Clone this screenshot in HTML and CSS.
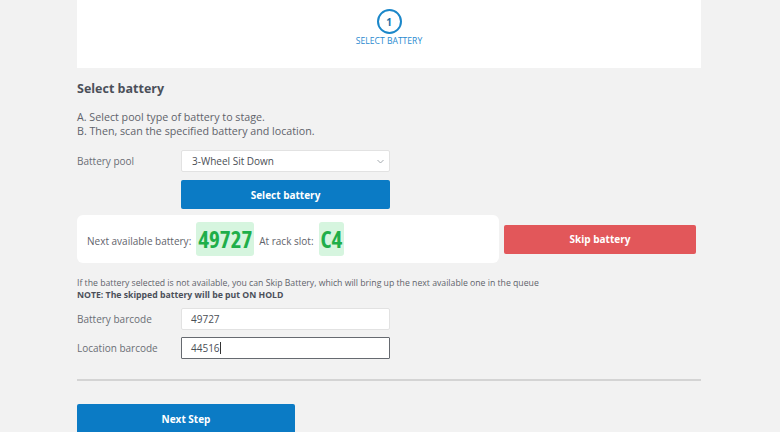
FILE: index.html
```html
<!DOCTYPE html>
<html>
<head>
<meta charset="utf-8">
<link rel="stylesheet" href="styles.css">
</head>
<body>
<div class="page">
  <div class="stepper">
    <div class="step">
      <div class="step-circle">1</div>
      <div class="step-label">SELECT BATTERY</div>
    </div>
  </div>

  <h2 class="title">Select battery</h2>
  <p class="intro">A. Select pool type of battery to stage.<br>B. Then, scan the specified battery and location.</p>

  <div class="form-row pool-row">
    <label class="label">Battery pool</label>
    <div class="select">
      <span>3-Wheel Sit Down</span>
      <svg class="chev" width="7" height="5" viewBox="0 0 7 5"><path d="M0.5 1 L3.5 4 L6.5 1" fill="none" stroke="#9aa0a6" stroke-width="0.9"/></svg>
    </div>
  </div>
  <div class="form-row">
    <span class="label"></span>
    <button class="btn btn-blue btn-select">Select battery</button>
  </div>

  <div class="info-row">
    <div class="info-box">
      <span class="info-text">Next available battery:</span>
      <span class="badge">49727</span>
      <span class="info-text">At rack slot:</span>
      <span class="badge">C4</span>
    </div>
    <button class="btn btn-red btn-skip">Skip battery</button>
  </div>

  <p class="note">If the battery selected is not available, you can Skip Battery, which will bring up the next available one in the queue<br><strong>NOTE: The skipped battery will be put ON HOLD</strong></p>

  <div class="form-row barcode-row">
    <label class="label">Battery barcode</label>
    <div class="input">49727</div>
  </div>
  <div class="form-row barcode-row">
    <label class="label">Location barcode</label>
    <div class="input input-focus">44516<span class="caret"></span></div>
  </div>

  <hr class="divider">

  <button class="btn btn-blue btn-next">Next Step</button>
</div>
</body>
</html>
```

FILE: styles.css
```css
* { box-sizing: border-box; }
html, body { margin: 0; padding: 0; }
body {
  background: #f2f2f2;
  font-family: "Open Sans", "Noto Sans", sans-serif;
  color: #5d6169;
  overflow: hidden;
  height: 432px;
}
.page {
  width: 624px;
  margin: 0 auto;
  position: relative;
  left: -1px;
}
.stepper {
  background: #fff;
  height: 68px;
  display: flex;
  justify-content: center;
  padding-top: 9px;
}
.step {
  display: flex;
  flex-direction: column;
  align-items: center;
}
.step-circle {
  width: 25px;
  height: 25px;
  border: 2px solid #1b87c9;
  border-radius: 50%;
  display: flex;
  align-items: center;
  justify-content: center;
  font-size: 10px;
  font-weight: 700;
  color: #1b6fa8;
}
.step-label {
  margin-top: 1px;
  font-size: 8.6px;
  color: #2a8ad0;
}
.title {
  margin: 12px 0 0;
  font-size: 12.5px;
  font-weight: 700;
  color: #4b505a;
  line-height: 18px;
}
.intro {
  margin: 12px 0 0;
  font-size: 10.7px;
  line-height: 14px;
  color: #5f636b;
}
.form-row {
  display: flex;
  align-items: center;
}
.label {
  width: 104px;
  flex: none;
  font-size: 10px;
  color: #6a6e75;
}
.pool-row { margin-top: 12px; }
.select {
  width: 209px;
  height: 22px;
  background: #fff;
  border: 1px solid #e2e2e2;
  border-radius: 2px;
  display: flex;
  align-items: center;
  justify-content: space-between;
  padding: 0 5px 0 10px;
  font-size: 10px;
  color: #4a4e55;
}
.chev { margin-top: 1px; }
.btn {
  border: none;
  font-family: "Open Sans", "Noto Sans", sans-serif;
  font-weight: 700;
  color: #fff;
  font-size: 10px;
  border-radius: 2px;
  cursor: pointer;
}
.btn-blue { background: #0b7bc5; }
.btn-red { background: #e2575a; }
.btn-select {
  margin-top: 8px;
  width: 209px;
  height: 29px;
}
.info-row {
  display: flex;
  align-items: center;
  margin-top: 6px;
}
.info-box {
  width: 422px;
  height: 48px;
  background: #fff;
  border-radius: 6px;
  display: flex;
  align-items: center;
  padding-left: 10px;
  gap: 5px;
}
.info-text {
  font-size: 10px;
  color: #5f636b;
  font-stretch: 92%;
  margin-top: 3px;
}
.badge {
  background: #d6f5df;
  color: #1fae4a;
  font-weight: 700;
  font-size: 23px;
  font-stretch: 75%;
  height: 34px;
  display: flex;
  align-items: center;
  padding: 0 2px;
  border-radius: 3px;
}
.btn-skip {
  margin-left: 5px;
  width: 192px;
  height: 29px;
}
.note {
  margin: 14px 0 0;
  font-size: 8.7px;
  line-height: 12px;
  color: #5f636b;
}
.note strong { color: #4b505a; }
.barcode-row { margin-top: 7px; }
.input {
  width: 209px;
  height: 22px;
  background: #fff;
  border: 1px solid #e2e2e2;
  border-radius: 2px;
  display: flex;
  align-items: center;
  padding-left: 9px;
  font-size: 10px;
  color: #4a4e55;
}
.input-focus {
  border: 1px solid #666a70;
  border-radius: 1px;
}
.caret {
  display: inline-block;
  width: 1px;
  height: 12px;
  background: #333;
}
.divider {
  margin: 20px 0 0;
  border: none;
  border-top: 2px solid #d4d4d4;
  height: 0;
}
.btn-next {
  margin-top: 23px;
  width: 218px;
  height: 30px;
  font-size: 10px;
}
```
